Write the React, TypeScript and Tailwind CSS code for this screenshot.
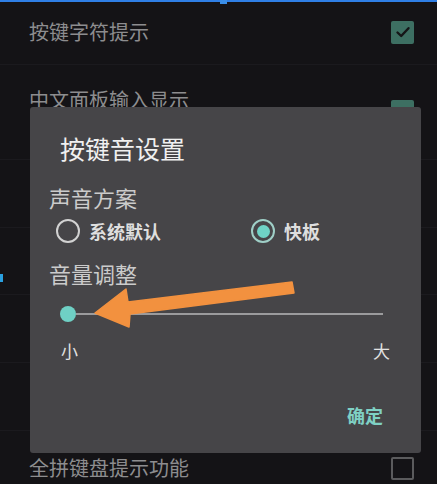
import React from "react";

const font = { fontFamily: '"Noto Sans CJK SC", "Noto Sans", sans-serif' };

function CheckBox({ checked }: { checked: boolean }) {
  if (checked) {
    return (
      <div className="flex h-[23px] w-[23px] items-center justify-center rounded-[2px] bg-[#3d6f62]">
        <svg width="16" height="16" viewBox="0 0 16 16" fill="none">
          <path d="M2.5 8.5 L6.2 12 L13.5 4.2" stroke="#151517" strokeWidth="2.4" strokeLinecap="round" strokeLinejoin="round" />
        </svg>
      </div>
    );
  }
  return <div className="h-[23px] w-[23px] rounded-[2px] border-[2.5px] border-[#5b5b5d]" />;
}

function Row({ label, checked, h }: { label: string; checked?: boolean; h: string }) {
  return (
    <div className={`flex items-center justify-between border-b border-[#1b1a1e] pl-[29px] pr-[23px] ${h}`}>
      <span className="text-[20px] leading-[28px] text-[#8d8d8f]">{label}</span>
      {checked !== undefined && <CheckBox checked={checked} />}
    </div>
  );
}

function Radio({ on, label }: { on: boolean; label: string }) {
  return (
    <div className="flex items-center gap-[9px]">
      <div
        className={`flex h-[24px] w-[24px] items-center justify-center rounded-full border-[2.5px] ${
          on ? "border-[#9fcfc7]" : "border-[#d2d2d2]"
        }`}
      >
        {on && <div className="h-[13px] w-[13px] rounded-full bg-[#6fd3c6]" />}
      </div>
      <span className="text-[18px] font-bold leading-[24px] text-[#dedede]">{label}</span>
    </div>
  );
}

export default function App() {
  return (
    <div className="relative h-[484px] w-[437px] overflow-hidden bg-[#141316]" style={font}>
      {/* top status line */}
      <div className="absolute left-0 top-0 h-[2px] w-full bg-[#2f7fe6]" />
      <div className="absolute left-[220px] top-0 h-[4px] w-[7px] bg-[#3a8ee8]" />
      <div className="absolute left-0 top-[274px] h-[8px] w-[3px] bg-[#2aa0e0]" />

      {/* settings list behind the dialog */}
      <div className="flex flex-col">
        <Row label="按键字符提示" checked h="h-[65px]" />
        <div className="flex h-[95px] items-start justify-between border-b border-[#1b1a1e] pl-[29px] pr-[23px] pt-[21px]">
          <span className="text-[20px] leading-[28px] text-[#8d8d8f]">中文面板输入显示</span>
          <div className="mt-[14px]">
            <CheckBox checked />
          </div>
        </div>
        <Row label="" h="h-[68px]" />
        <Row label="" h="h-[67px]" />
        <Row label="" h="h-[68px]" />
        <Row label="" h="h-[68px]" />
        <div className="flex h-[68px] items-center justify-between pl-[29px] pr-[23px] pt-[6px]">
          <span className="text-[20px] leading-[28px] text-[#8d8d8f]">全拼键盘提示功能</span>
          <CheckBox checked={false} />
        </div>
      </div>

      {/* dialog */}
      <div className="absolute left-[30px] top-[107px] flex h-[346px] w-[391px] flex-col rounded-[3px] bg-[#464548]">
        <div className="mt-[25px] pl-[30px] text-[25px] leading-[32px] text-[#f0f0f0]">按键音设置</div>
        <div className="mt-[19px] pl-[19px] text-[22px] leading-[28px] text-[#cbcbcb]">声音方案</div>
        <div className="mt-[8px] flex pl-[26px]">
          <div className="w-[195px]">
            <Radio on={false} label="系统默认" />
          </div>
          <Radio on label="快板" />
        </div>
        <div className="mt-[16px] pl-[19px] text-[22px] leading-[28px] text-[#cbcbcb]">音量调整</div>
        <div className="mt-[19px] flex h-[16px] items-center pl-[30px] pr-[38px]">
          <div className="h-[16px] w-[16px] shrink-0 rounded-full bg-[#6fd0c5]" />
          <div className="h-[1.5px] flex-1 bg-[#9b9b9d]" />
        </div>
        <div className="mt-[17px] flex justify-between pl-[31px] pr-[31px] text-[17px] leading-[24px] text-[#e2e2e2]">
          <span>小</span>
          <span>大</span>
        </div>
        <div className="mt-[40px] flex justify-end pr-[38px] text-[18px] font-bold leading-[24px] text-[#7fd0c4]">
          确定
        </div>
      </div>

      {/* orange annotation arrow */}
      <svg className="pointer-events-none absolute left-0 top-0" width="437" height="484">
        <polygon
          points="95,313 126,289 128,302 292,282 294,293 130,314 129,327"
          fill="#f2913f"
          strokeLinejoin="round"
          stroke="#f2913f"
          strokeWidth="1.5"
        />
      </svg>
    </div>
  );
}
